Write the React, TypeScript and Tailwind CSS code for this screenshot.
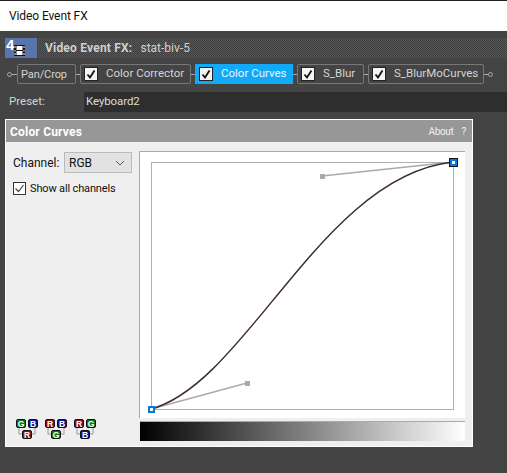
import React from "react";

function Check() {
  return (
    <span className="flex h-[14px] w-[14px] shrink-0 items-center justify-center border border-[#222] bg-[#f4f4f4]">
      <svg width="12" height="12" viewBox="0 0 12 12" fill="none">
        <path d="M2.5 6.5 L5 9.5 L9.5 2.5" stroke="#111" strokeWidth="1.8" />
      </svg>
    </span>
  );
}

function Connector() {
  return <span className="h-px w-[4px] shrink-0 bg-[#aaa]" />;
}

function Node() {
  return <span className="h-[5px] w-[5px] shrink-0 rounded-full border border-[#aaa]" />;
}

function Chip({ label, w, active, check = true, text }: { label: string; w: string; active?: boolean; check?: boolean; text: string }) {
  return (
    <div
      className={`flex h-[20px] shrink-0 items-center whitespace-nowrap pl-[3px] text-[11.5px] ${w} ${
        active ? "bg-[#12a9f7] pl-[4px] text-[#eaf6ff]" : "rounded-[2px] border border-[#777] text-[#d4d4d4]"
      }`}
    >
      {check && <Check />}
      <span className={text}>{label}</span>
    </div>
  );
}

function Badge({ c, t }: { c: string; t: string }) {
  return (
    <g>
      <rect x="0.5" y="0.5" width="9" height="8" rx="1.5" fill={c} stroke="#111" />
      <text x="5" y="7.6" textAnchor="middle" fontSize="8.5" fontWeight="700" fontFamily="Liberation Sans, sans-serif" fill="#fff">
        {t}
      </text>
    </g>
  );
}

const R = "#8a0f12";
const G = "#0d7a10";
const B = "#0f1390";

function Swap({ a, b, c, ta, tb, tc }: { a: string; b: string; c: string; ta: string; tb: string; tc: string }) {
  return (
    <svg width="22" height="20" viewBox="0 0 22 20" className="shrink-0">
      <path d="M3 9V15H6M19 9V15H16" fill="none" stroke="#999" strokeWidth="1" />
      <g><Badge c={a} t={ta} /></g>
      <g transform="translate(12,0)"><Badge c={b} t={tb} /></g>
      <g transform="translate(6,11)"><Badge c={c} t={tc} /></g>
    </svg>
  );
}

export default function App() {
  return (
    <div className="flex h-[473px] w-[507px] flex-col overflow-hidden bg-[#444444] font-['Roboto',sans-serif] text-[12px] leading-none">
      <div className="h-px bg-[#222]" />
      <div className="flex h-[30px] items-center bg-white pl-[9px] tracking-[-0.1px] text-[#111]">Video Event FX</div>

      <div className="mt-[7px] flex h-[20px] items-stretch pl-[5px]">
        <div className="relative w-[32px] bg-[#5a75ab]">
          <span className="absolute left-[1px] top-[-1px] font-['Liberation_Sans',sans-serif] text-[15px] font-bold leading-[15px] text-white">4</span>
          <svg width="11" height="11" viewBox="0 0 11 11" className="absolute left-[9px] top-[7px]">
            <rect width="11" height="11" fill="#111" />
            <rect x="2.500" y="1" width="6" height="4" fill="#fff" />
            <rect x="2.500" y="6" width="6" height="4" fill="#fff" />
            <path d="M1 1V3M1 5V6.500M1 8V10M10 1V3M10 5V6.500M10 8V10" stroke="#fff" />
          </svg>
        </div>
        <div className="ml-[1px] flex flex-1 items-center bg-[repeating-conic-gradient(#5c5c5c_0_25%,#3a3a3a_0_50%)] bg-[length:2px_2px] pl-[7px] text-[#d0d0d0]">
          <span className="font-bold tracking-[0.2px]">Video Event FX:</span>
          <span className="ml-[8px]">stat-biv-5</span>
        </div>
      </div>

      <div className="mt-[6px] flex h-[20px] items-center pl-[7px]">
        <Node />
        <span className="h-px w-[5px] shrink-0 bg-[#aaa]" />
        <Chip label="Pan/Crop" w="w-[59px]" check={false} text="text-[11px] tracking-[-0.1px]" />
        <Connector />
        <Chip label="Color Corrector" w="w-[111px]" text="ml-[8px]" />
        <Connector />
        <Chip label="Color Curves" w="w-[98px]" active text="ml-[8px]" />
        <Connector />
        <Chip label="S_Blur" w="w-[67px]" text="ml-[8px]" />
        <Connector />
        <Chip label="S_BlurMoCurves" w="w-[116px]" text="ml-[8px]" />
        <Connector />
        <Node />
      </div>

      <div className="mt-[8px] flex h-[20px] items-stretch text-[11.5px]">
        <div className="flex w-[84px] items-center pl-[9px] text-[#d4d4d4]">Preset:</div>
        <div className="flex flex-1 items-center bg-[#2e2e2e] pl-[2px] tracking-[-0.1px] text-[#dcdcdc]">Keyboard2</div>
      </div>

      <div className="ml-[5px] mt-[7px] flex h-[328px] w-[468px] flex-col border border-white bg-[#efefef]">
        <div className="flex h-[22px] shrink-0 items-center justify-between bg-[#979797] pl-[4px] pr-[6px] pt-px text-white">
          <span className="font-bold tracking-[0.2px]">Color Curves</span>
          <span className="text-[10px] tracking-[-0.3px] text-[#f0f0f0]">About<span className="ml-[8px]">?</span></span>
        </div>
        <div className="flex flex-1">
          <div className="flex w-[133px] shrink-0 flex-col pl-[7px] pt-[10px] text-[#111]">
            <div className="flex items-center">
              <span className="w-[51px]">Channel:</span>
              <div className="flex h-[21px] w-[68px] items-center justify-between border border-[#bbb] bg-[#e2e2e2] pl-[4px] pr-[6px]">
                RGB
                <svg width="10" height="6" viewBox="0 0 10 6" fill="none">
                  <path d="M1 1 L5 5 L9 1" stroke="#555" />
                </svg>
              </div>
            </div>
            <label className="mt-[9px] flex items-center">
              <span className="flex h-[13px] w-[13px] shrink-0 items-center justify-center border border-[#333] bg-white">
                <svg width="11" height="11" viewBox="0 0 11 11" fill="none">
                  <path d="M1.500 5.500 L4.500 8.500 L9.500 2" stroke="#444" strokeWidth="1.200" />
                </svg>
              </span>
              <span className="ml-[4px] whitespace-nowrap text-[11px] tracking-[-0.15px]">Show all channels</span>
            </label>
            <div className="mt-auto mb-[7px] ml-[3px] flex gap-[7px]">
              <Swap a={G} b={B} c={R} ta="G" tb="B" tc="R" />
              <Swap a={R} b={B} c={G} ta="R" tb="B" tc="G" />
              <Swap a={R} b={G} c={B} ta="R" tb="G" tc="B" />
            </div>
          </div>
          <div className="flex w-[327px] shrink-0 flex-col pt-[9px]">
            <svg width="326" height="267" viewBox="139 151 326 267" className="block bg-white">
              <path d="M139.500 418V151.500H465" fill="none" stroke="#aaa" />
              <rect x="151.500" y="162.500" width="302" height="247" fill="#fff" stroke="#b0b0b0" />
              <path d="M151 409 L247 383 M453 162 L322 176" stroke="#aaa" strokeWidth="1.500" />
              <rect x="245" y="381" width="5" height="5" fill="#aaa" />
              <rect x="320" y="174" width="5" height="5" fill="#aaa" />
              <path d="M151 409 C 247 383 322 176 453 162" fill="none" stroke="#3f2a3a" strokeWidth="1.500" />
              <rect x="149" y="407" width="5" height="5" fill="#fff" stroke="#0a78d8" strokeWidth="2" />
              <rect x="449.500" y="158.500" width="8" height="8" fill="#0a78d8" stroke="#111" />
              <rect x="452" y="161" width="3" height="3" fill="#fff" />
            </svg>
            <div className="ml-px mt-[3px] h-[20px] w-[325px] border-t border-[#aaa] bg-[linear-gradient(to_right,#000,#fff)]" />
          </div>
        </div>
      </div>
    </div>
  );
}
